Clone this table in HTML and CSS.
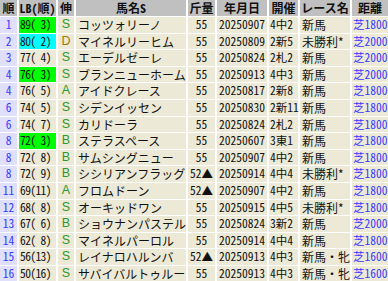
FILE: index.html
```html
<!DOCTYPE html>
<html lang="ja">
<head>
<meta charset="utf-8">
<link rel="stylesheet" href="styles.css">
</head>
<body>
<div class="grid">
<div class="row head"><div>順</div><div>LB(順)</div><div>伸</div><div>馬名S</div><div>斤量</div><div>年月日</div><div>開催</div><div>レース名</div><div>距離</div></div>
<div class="row"><div class="rank">1</div><div class="lb hi-g">89( 3)</div><div class="nobi">S</div><div class="name">コッツォリーノ</div><div class="kin">55</div><div class="date">20250907</div><div class="kai">4中2</div><div class="race">新馬</div><div class="dist">芝1800</div></div>
<div class="row"><div class="rank">2</div><div class="lb hi-c">80( 2)</div><div class="nobi d">D</div><div class="name">マイネルリーヒム</div><div class="kin">55</div><div class="date">20250809</div><div class="kai">2新5</div><div class="race">未勝利*</div><div class="dist">芝2000</div></div>
<div class="row"><div class="rank">3</div><div class="lb">77( 4)</div><div class="nobi">S</div><div class="name">エーデルゼーレ</div><div class="kin">55</div><div class="date">20250824</div><div class="kai">2札2</div><div class="race">新馬</div><div class="dist">芝2000</div></div>
<div class="row"><div class="rank">4</div><div class="lb hi-g">76( 3)</div><div class="nobi">S</div><div class="name">ブランニューホーム</div><div class="kin">55</div><div class="date">20250913</div><div class="kai">4中3</div><div class="race">新馬</div><div class="dist">芝2000</div></div>
<div class="row"><div class="rank">4</div><div class="lb">76( 5)</div><div class="nobi">A</div><div class="name">アイドクレース</div><div class="kin">55</div><div class="date">20250817</div><div class="kai">2新8</div><div class="race">新馬</div><div class="dist">芝1800</div></div>
<div class="row"><div class="rank">6</div><div class="lb">74( 5)</div><div class="nobi">S</div><div class="name">シデンイッセン</div><div class="kin">55</div><div class="date">20250830</div><div class="kai">2新11</div><div class="race">新馬</div><div class="dist">芝1800</div></div>
<div class="row"><div class="rank">6</div><div class="lb">74( 7)</div><div class="nobi">S</div><div class="name">カリドーラ</div><div class="kin">55</div><div class="date">20250824</div><div class="kai">2札2</div><div class="race">新馬</div><div class="dist">芝1800</div></div>
<div class="row"><div class="rank">8</div><div class="lb hi-g">72( 3)</div><div class="nobi">B</div><div class="name">ステラスペース</div><div class="kin">55</div><div class="date">20250607</div><div class="kai">3東1</div><div class="race">新馬</div><div class="dist">芝1800</div></div>
<div class="row"><div class="rank">8</div><div class="lb">72( 8)</div><div class="nobi">B</div><div class="name">サムシングニュー</div><div class="kin">55</div><div class="date">20250907</div><div class="kai">4中2</div><div class="race">新馬</div><div class="dist">芝1800</div></div>
<div class="row"><div class="rank">8</div><div class="lb">72( 9)</div><div class="nobi">B</div><div class="name">シシリアンフラッグ</div><div class="kin">52▲</div><div class="date">20250914</div><div class="kai">4中4</div><div class="race">未勝利*</div><div class="dist">芝1800</div></div>
<div class="row"><div class="rank">11</div><div class="lb">69(11)</div><div class="nobi">A</div><div class="name">フロムドーン</div><div class="kin">52▲</div><div class="date">20250907</div><div class="kai">4中2</div><div class="race">新馬</div><div class="dist">芝1800</div></div>
<div class="row"><div class="rank">12</div><div class="lb">68( 8)</div><div class="nobi">S</div><div class="name">オーキッドワン</div><div class="kin">55</div><div class="date">20250915</div><div class="kai">4中5</div><div class="race">未勝利*</div><div class="dist">芝1800</div></div>
<div class="row"><div class="rank">13</div><div class="lb">67( 6)</div><div class="nobi">B</div><div class="name">ショウナンパステル</div><div class="kin">55</div><div class="date">20250824</div><div class="kai">3新2</div><div class="race">新馬</div><div class="dist">芝2000</div></div>
<div class="row"><div class="rank">14</div><div class="lb">62( 8)</div><div class="nobi">S</div><div class="name">マイネルパーロル</div><div class="kin">55</div><div class="date">20250914</div><div class="kai">4中4</div><div class="race">新馬</div><div class="dist">芝1800</div></div>
<div class="row"><div class="rank">15</div><div class="lb">56(13)</div><div class="nobi">S</div><div class="name">レイナロハルンバ</div><div class="kin">52▲</div><div class="date">20250913</div><div class="kai">4中3</div><div class="race">新馬・牝</div><div class="dist">芝1600</div></div>
<div class="row"><div class="rank">16</div><div class="lb">50(16)</div><div class="nobi">S</div><div class="name">サバイバルトゥルー</div><div class="kin">55</div><div class="date">20250913</div><div class="kai">4中3</div><div class="race">新馬・牝</div><div class="dist">芝1600</div></div>
</div>
</body>
</html>
```
FILE: styles.css
```css
html, body {
  margin: 0;
  padding: 0;
  background: #ffffff;
  overflow: hidden;
}

.grid {
  display: grid;
  grid-template-columns: 17px 37px 16px 110px 27px 50px 29px 50px 36px;
  grid-template-rows: 16px;
  grid-auto-rows: 15.6px;
  column-gap: 2px;
  row-gap: 1px;
  width: 388px;
  font-family: "Noto Sans CJK JP", sans-serif;
  font-size: 11.5px;
  font-feature-settings: "hwid";
  color: #111111;
}

.row {
  display: contents;
}

.row > div {
  background: #ece9d6;
  line-height: 15.6px;
  white-space: nowrap;
}

.head > div {
  background: #c0c0c0;
  line-height: 16px;
  font-size: 12px;
  font-weight: bold;
  text-align: center;
  color: #111111;
}

.row > .rank {
  background: #e0e0fc;
  color: #3a3aff;
  text-align: center;
}

.lb {
  padding-left: 1px;
  letter-spacing: -0.6px;
}
.row > .hi-g { background: #00ff00; }
.row > .hi-c { background: #00ffff; }

.nobi {
  text-align: center;
  font-family: "Liberation Sans", sans-serif;
  font-size: 12.5px;
  font-feature-settings: normal;
  color: #2e9a2e;
}
.row > .nobi.d { color: #9a7a0a; }

.name {
  padding-left: 2px;
  font-size: 12px;
  font-feature-settings: normal;
}

.kin { text-align: center; }

.date { padding-left: 2px; }

.kai { padding-left: 1px; }

.race {
  padding-left: 2px;
  font-size: 12px;
  font-feature-settings: normal;
}

.row > .dist {
  padding-left: 1px;
  color: #3a3aff;
}
```
